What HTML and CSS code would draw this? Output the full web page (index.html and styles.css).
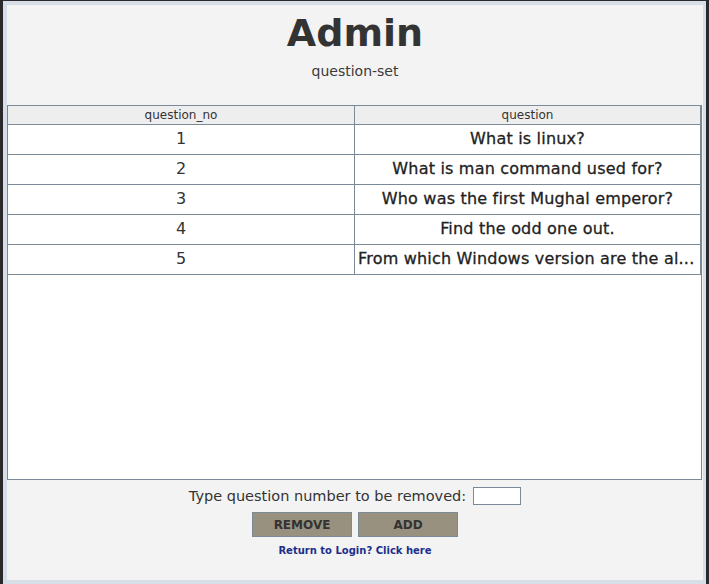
FILE: index.html
```html
<!DOCTYPE html>
<html>
<head>
<meta charset="utf-8">
<title>Admin</title>
<link rel="stylesheet" href="styles.css">
</head>
<body>
<div class="frame">
  <div class="content">
    <h1 class="title">Admin</h1>
    <p class="subtitle">question-set</p>
    <div class="scroll">
      <table class="grid">
        <colgroup><col class="col-no"><col class="col-q"></colgroup>
        <thead>
          <tr><th>question_no</th><th>question</th></tr>
        </thead>
        <tbody>
          <tr><td class="num">1</td><td class="q">What is linux?</td></tr>
          <tr><td class="num">2</td><td class="q">What is man command used for?</td></tr>
          <tr><td class="num">3</td><td class="q">Who was the first Mughal emperor?</td></tr>
          <tr><td class="num">4</td><td class="q">Find the odd one out.</td></tr>
          <tr><td class="num">5</td><td class="q q-cut">From which Windows version are the al...</td></tr>
        </tbody>
      </table>
    </div>
    <div class="remove-row">
      <label class="remove-label" for="qno">Type question number to be removed:</label>
      <input class="num-input" id="qno" type="text">
    </div>
    <div class="btn-row">
      <button class="btn">REMOVE</button>
      <button class="btn">ADD</button>
    </div>
    <a class="back-link" href="#">Return to Login? Click here</a>
  </div>
</div>
</body>
</html>
```
FILE: styles.css
```css
html, body {
  margin: 0;
  height: 100%;
}
body {
  background: #2a2a2d;
  font-family: "DejaVu Sans", sans-serif;
  color: #333333;
  overflow: hidden;
}
.frame {
  margin: 1px 3px 0 3px;
  width: 703px;
  height: 583px;
  box-sizing: border-box;
  padding: 4px 3px 4px 4px;
  background: #d7dee7;
}
.content {
  height: 575px;
  box-sizing: border-box;
  background: #f3f3f3;
  display: flex;
  flex-direction: column;
  align-items: center;
  padding-top: 6px;
}
.title {
  margin: 0;
  font-size: 38px;
  line-height: 44px;
  font-weight: bold;
  color: #333333;
}
.subtitle {
  margin: 8px 0 0;
  font-size: 14px;
  line-height: 17px;
  color: #3a3a3a;
}
.scroll {
  align-self: flex-start;
  margin-top: 25px;
  width: 695px;
  height: 375px;
  box-sizing: border-box;
  border: 1px solid #7b8a99;
  background: #ffffff;
}
.grid {
  width: 693px;
  table-layout: fixed;
  border-collapse: separate;
  border-spacing: 0;
}
.col-no { width: 347px; }
.grid th {
  height: 18px;
  padding: 0;
  line-height: 18px;
  font-size: 12px;
  font-weight: normal;
  background: #eeeeee;
  border-right: 1px solid #7b8a99;
  border-bottom: 1px solid #7b8a99;
  vertical-align: top;
  color: #333333;
}
.grid td {
  height: 27px;
  padding: 0 3px 2px;
  line-height: 27px;
  font-size: 16px;
  text-align: center;
  vertical-align: top;
  white-space: nowrap;
  overflow: hidden;
  border-right: 1px solid #7b8a99;
  border-bottom: 1px solid #7b8a99;
  color: #333333;
}
.grid td.q {
  letter-spacing: 0.2px;
  color: #222222;
  -webkit-text-stroke: 0.3px #222222;
}
.grid td.q-cut {
  text-align: left;
  padding-left: 3px;
}
.remove-row {
  margin-top: 7px;
  display: flex;
  align-items: center;
  gap: 7px;
}
.remove-label {
  font-size: 14.5px;
  line-height: 18px;
  color: #333333;
}
.num-input {
  width: 48px;
  height: 18px;
  box-sizing: border-box;
  margin: 0;
  padding: 0 2px;
  border: 1px solid #7b8a99;
  background: #ffffff;
  font-family: "DejaVu Sans", sans-serif;
  font-size: 12px;
}
.btn-row {
  margin-top: 7px;
  display: flex;
  gap: 6px;
}
.btn {
  width: 100px;
  height: 25px;
  margin: 0;
  padding: 0;
  box-sizing: border-box;
  background: #999180;
  border: 1px solid #7b8a99;
  font-family: "DejaVu Sans", sans-serif;
  font-size: 12px;
  font-weight: bold;
  color: #333333;
}
.back-link {
  margin-top: 8px;
  font-size: 10px;
  line-height: 12px;
  font-weight: bold;
  color: #1b2f8c;
  text-decoration: none;
}
```
